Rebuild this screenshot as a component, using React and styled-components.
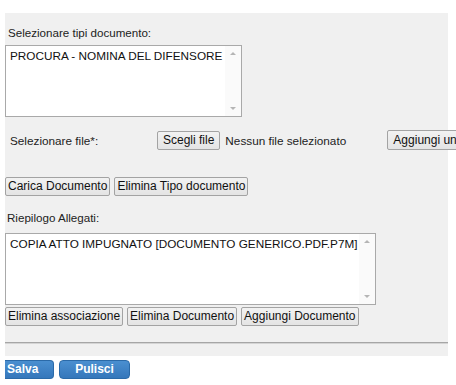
import React from "react";
import styled, { createGlobalStyle } from "styled-components";

const Global = createGlobalStyle`
  html, body { margin: 0; padding: 0; background: #ffffff; overflow: hidden; }
  body { font-family: "Liberation Sans", Arial, sans-serif; font-size: 11.75px; color: #222; }
`;

const Page = styled.div`
  width: 456px;
  height: 385px;
  overflow: hidden;
  padding-top: 13px;
  box-sizing: border-box;
`;

const Panel = styled.div`
  margin-left: 5px;
  width: 443px;
  background: #f0f0f0;
  padding: 13px 0 12px 0;
  display: flex;
  flex-direction: column;
  white-space: nowrap;
`;

const Label = styled.div`
  line-height: 14px;
  font-size: 11.6px;
  padding-left: ${(p) => p.$indent || 3}px;
  margin-top: ${(p) => p.$top || 0}px;
`;

const ListBox = styled.div`
  margin-top: ${(p) => p.$top}px;
  width: ${(p) => p.$width}px;
  height: 72px;
  box-sizing: border-box;
  border: 1px solid #a9a9a9;
  background: #fff;
  display: flex;
`;

const ListItems = styled.div`
  flex: 1;
  padding: 3px 0 0 4px;
  font-size: 11.75px;
  line-height: 14px;
  color: #111;
`;

const ScrollBar = styled.div`
  width: 16px;
  display: flex;
  flex-direction: column;
  justify-content: space-between;
  align-items: center;
  padding: 6px 0 6px;
  background: #fafafa;
`;

const Arrow = styled.div`
  width: 0;
  height: 0;
  border-left: 3px solid transparent;
  border-right: 3px solid transparent;
  ${(p) => (p.$down ? "border-top: 3px solid #b5b5b5;" : "border-bottom: 3px solid #b5b5b5;")}
`;

const FileRow = styled.div`
  margin-top: 13px;
  display: flex;
  align-items: center;
  height: 20px;
  width: 470px;
`;

const FileLabel = styled.div`
  width: 147px;
  padding-left: 5px;
  flex-shrink: 0;
`;

const NoFile = styled.span`
  margin-left: 5px;
  width: 162px;
  flex-shrink: 0;
`;

const Btn = styled.button`
  font-family: "Liberation Sans", Arial, sans-serif;
  font-size: 12px;
  color: #111;
  height: ${(p) => p.$h || 19}px;
  padding: 0 ${(p) => p.$pad || 2}px;
  margin: 0;
  border: 1px solid #a3a3a3;
  border-radius: 2px;
  background: linear-gradient(#f2f2f2, #e4e4e4);
  white-space: nowrap;
  flex-shrink: 0;
  line-height: 17px;
`;

const ButtonRow = styled.div`
  margin-top: ${(p) => p.$top}px;
  display: flex;
  gap: 4px;
`;

const Rule = styled.div`
  margin-top: 16px;
  height: 0;
  border-top: 1px solid #a6a6a6;
  border-bottom: 1px solid #d4d4d4;
`;

const Actions = styled.div`
  margin: 4px 0 0 5px;
  display: flex;
  gap: 5px;
`;

const BlueBtn = styled.button`
  font-family: "Liberation Sans", Arial, sans-serif;
  font-weight: bold;
  font-size: 12px;
  color: #fff;
  height: 19px;
  width: ${(p) => p.$w}px;
  margin: 0;
  border: 1px solid #2b6aa8;
  border-radius: ${(p) => (p.$clipped ? "0 4px 4px 0" : "4px")};
  ${(p) => (p.$clipped ? "border-left: none;" : "")}
  background: linear-gradient(#4a8fd0, #3577bb);
  text-align: ${(p) => (p.$clipped ? "left" : "center")};
  padding: ${(p) => (p.$clipped ? "0 0 0 2px" : "0")};
  line-height: 17px;
`;

function ScrollList({ width, top, children }) {
  return (
    <ListBox $width={width} $top={top}>
      <ListItems>{children}</ListItems>
      <ScrollBar>
        <Arrow />
        <Arrow $down />
      </ScrollBar>
    </ListBox>
  );
}

export default function App() {
  return (
    <Page>
      <Global />
      <Panel>
        <Label>Selezionare tipi documento:</Label>
        <ScrollList width={237} top={5}>
          PROCURA - NOMINA DEL DIFENSORE
        </ScrollList>
        <FileRow>
          <FileLabel>Selezionare file*:</FileLabel>
          <Btn $pad={5}>Scegli file</Btn>
          <NoFile>Nessun file selezionato</NoFile>
          <Btn $h={20} $pad={5}>Aggiungi un file</Btn>
        </FileRow>
        <ButtonRow $top={27}>
          <Btn>Carica Documento</Btn>
          <Btn>Elimina Tipo documento</Btn>
        </ButtonRow>
        <Label $top={15} $indent={2}>Riepilogo Allegati:</Label>
        <ScrollList width={371} top={8}>
          COPIA ATTO IMPUGNATO [DOCUMENTO GENERICO.PDF.P7M]
        </ScrollList>
        <ButtonRow $top={2}>
          <Btn>Elimina associazione</Btn>
          <Btn>Elimina Documento</Btn>
          <Btn>Aggiungi Documento</Btn>
        </ButtonRow>
        <Rule />
      </Panel>
      <Actions>
        <BlueBtn $w={49} $clipped>Salva</BlueBtn>
        <BlueBtn $w={71}>Pulisci</BlueBtn>
      </Actions>
    </Page>
  );
}
